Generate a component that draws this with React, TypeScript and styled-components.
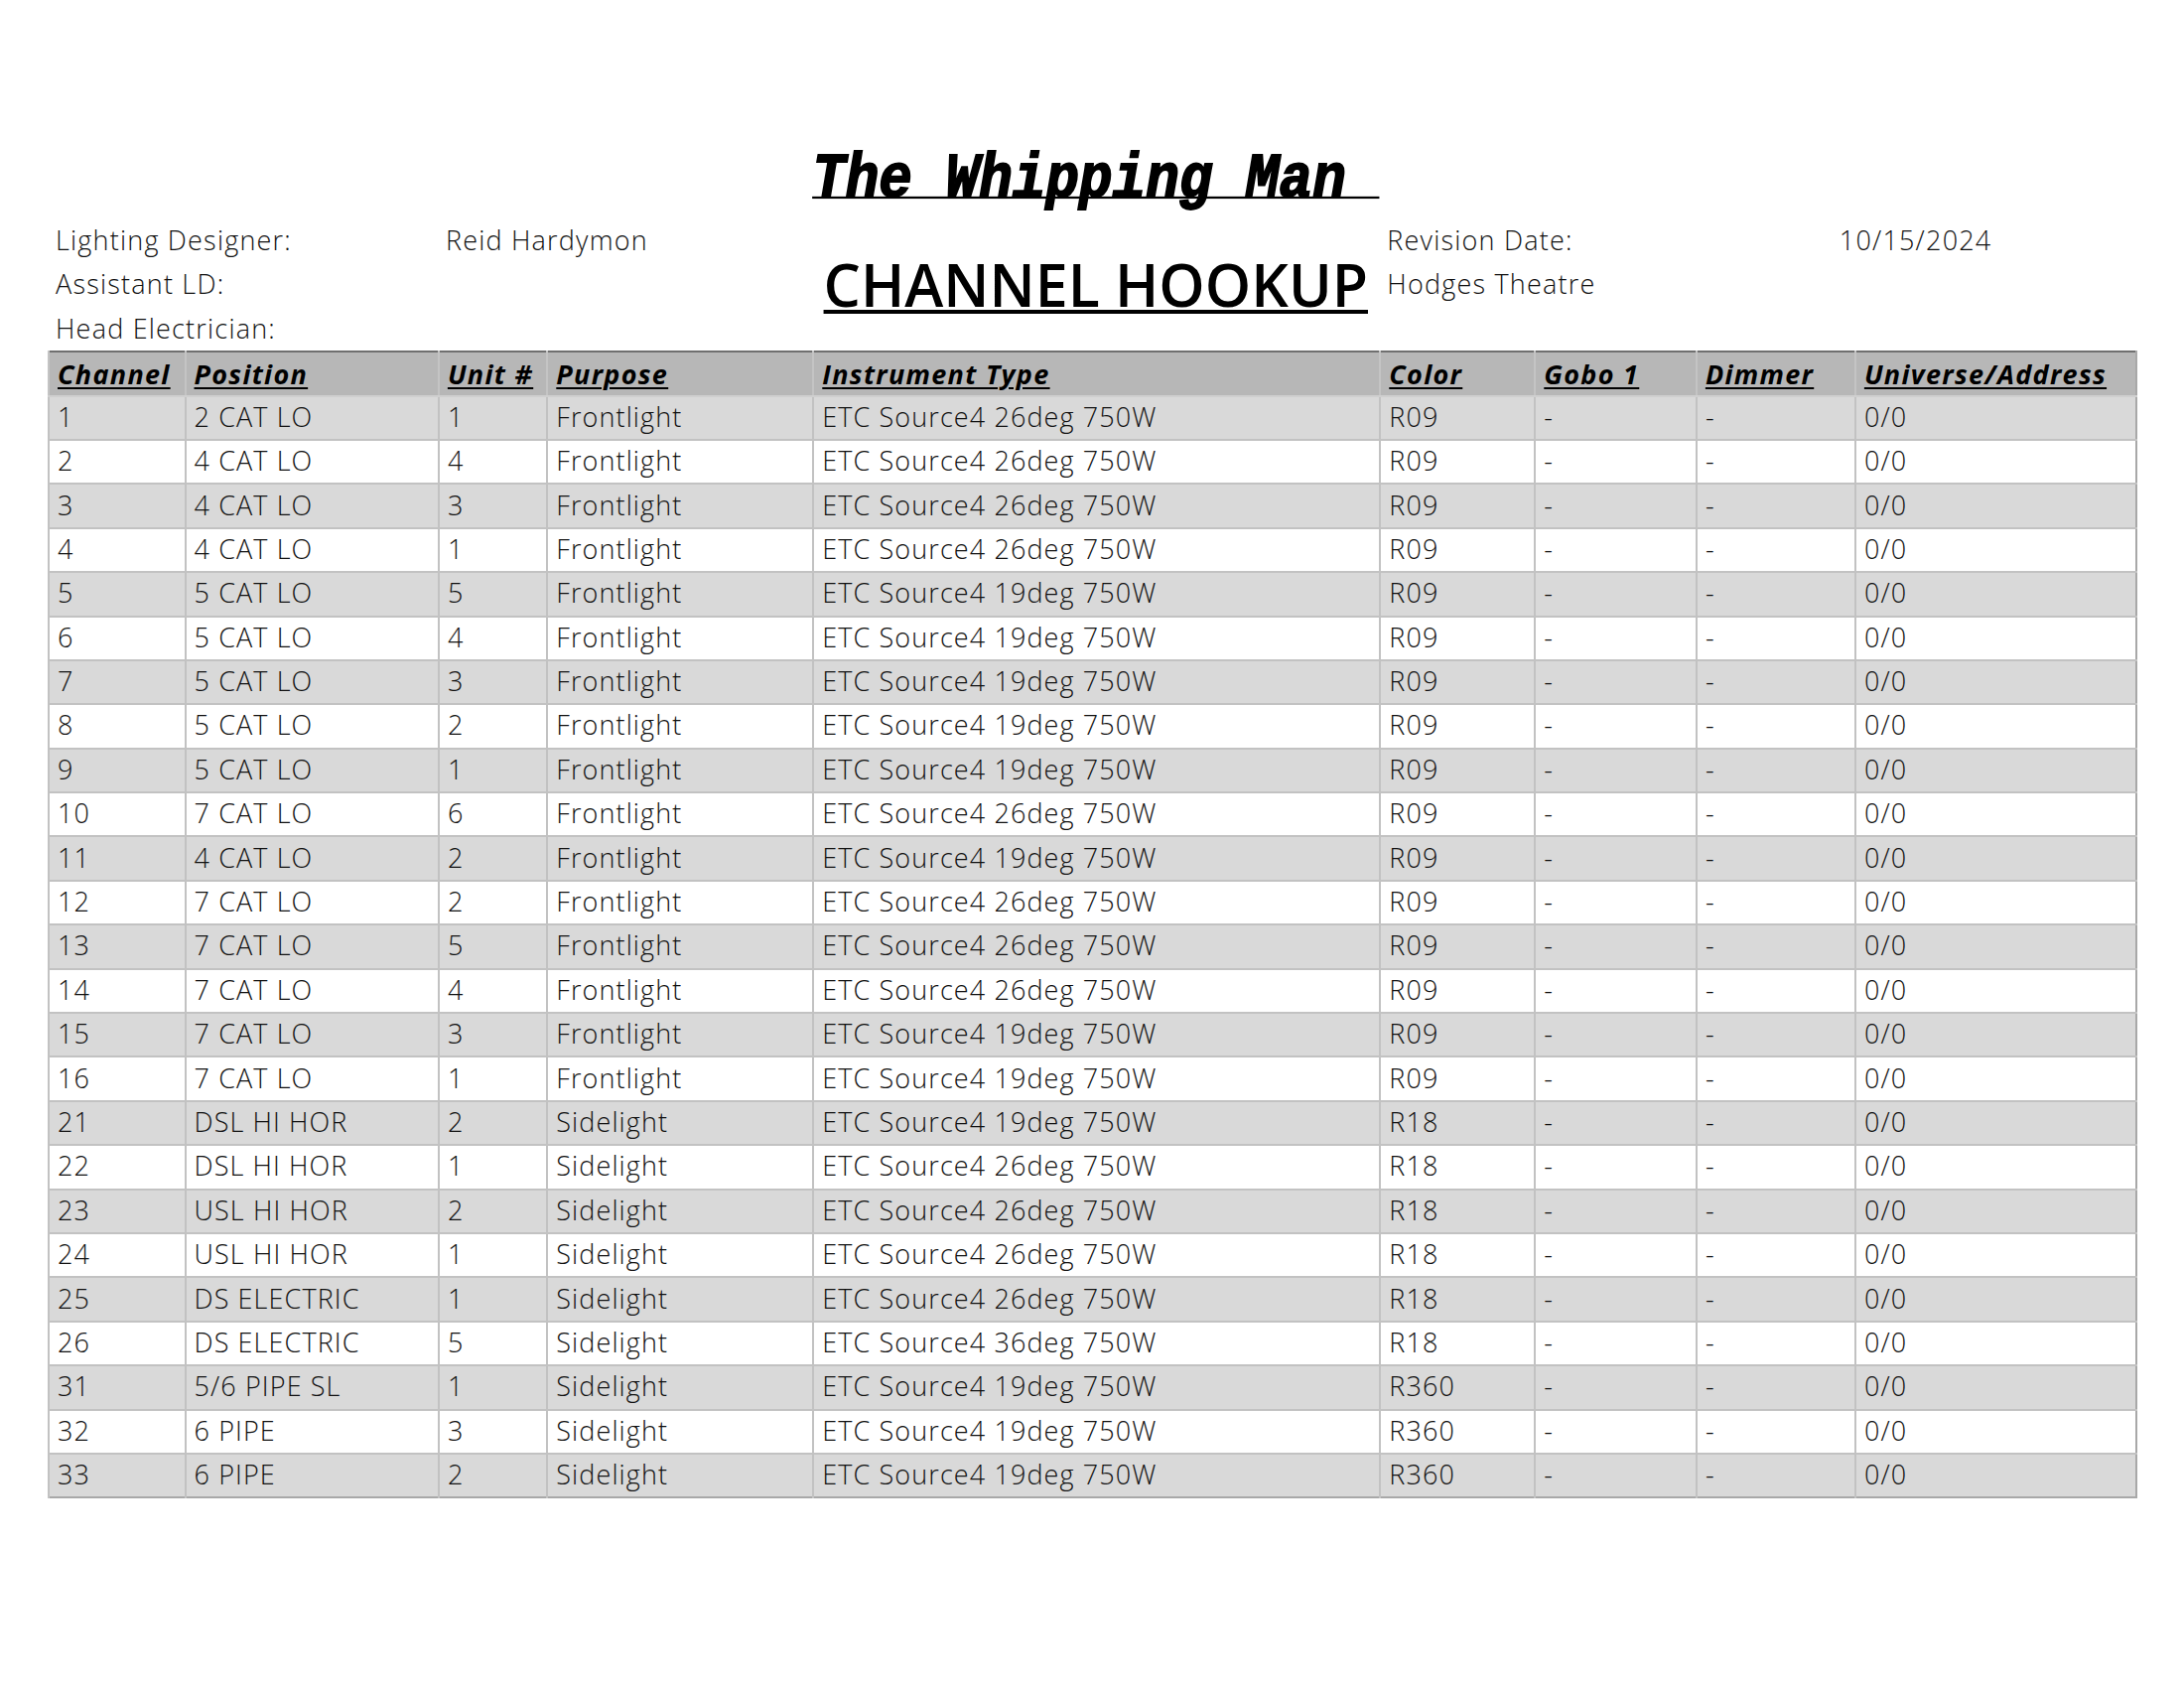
import React from "react";
import styled, { createGlobalStyle } from "styled-components";

const GlobalStyle = createGlobalStyle`
  html, body { margin: 0; padding: 0; background: #ffffff; }
  body { font-family: "Open Sans", "Lato", sans-serif; color: #000; }
`;

const COLS = "137.5px 255.4px 109.4px 268px 571px 156px 162.6px 160px 283.5px";
const ROW_H = 44.4;

const Page = styled.div`
  padding: 130px 0 0 48px;
  width: 2103.4px;
`;

const InfoGrid = styled.div`
  display: grid;
  grid-template-columns: ${COLS};
  grid-template-rows: 90px repeat(3, ${ROW_H}px);
`;

const Title = styled.div`
  grid-column: 5;
  grid-row: 1;
  justify-self: center;
  align-self: end;
  margin-bottom: 8px;
  font-family: "Liberation Mono", "DejaVu Sans Mono", monospace;
  font-weight: 700;
  font-style: italic;
  font-size: 56px;
  line-height: 58px;
  white-space: pre;
  -webkit-text-stroke: 1.6px #000;
  text-decoration: underline;
  text-decoration-thickness: 2px;
  text-underline-offset: 0px;
  text-decoration-skip-ink: none;
  transform: scaleY(1.12);
  transform-origin: 50% 78%;
`;

const InfoCell = styled.div<{ $col: number; $row: number; $span?: number; $center?: boolean }>`
  grid-column: ${(p) => p.$col} / span ${(p) => p.$span ?? 1};
  grid-row: ${(p) => p.$row};
  padding: 0 8px;
  white-space: nowrap;
  line-height: ${ROW_H}px;
  font-size: 27px;
  letter-spacing: 1.2px;
  font-weight: 300;
  color: #111;
  text-align: ${(p) => (p.$center ? "center" : "left")};
`;

const Heading = styled.div`
  grid-column: 5;
  grid-row: 3;
  justify-self: center;
  white-space: nowrap;
  font-family: "Open Sans", sans-serif;
  font-weight: 600;
  font-size: 59px;
  line-height: ${ROW_H}px;
  text-decoration: underline;
  text-decoration-thickness: 4px;
  text-underline-offset: 3px;
  text-decoration-skip-ink: none;
`;

const Table = styled.table`
  border-collapse: collapse;
  table-layout: fixed;
  width: 2103.4px;
  border-top: 2px solid #6f6f6f;
  border-left: 2px solid #6f6f6f;
  border-right: 2px solid #a8a8a8;
  border-bottom: 2px solid #a8a8a8;
`;

const HeadRow = styled.tr`
  height: ${ROW_H}px;
  background: #b7b7b7;
`;

const HeadCell = styled.th`
  padding: 0 8px;
  text-align: left;
  font-weight: 700;
  font-style: italic;
  font-size: 27px;
  letter-spacing: 1.3px;
  text-decoration: underline;
  text-decoration-thickness: 1.5px;
  text-underline-offset: 3px;
  white-space: nowrap;
  overflow: hidden;
  border-left: 2px solid #c4c4c4;
  border-bottom: 2px solid #cfcfcf;
`;

const BodyRow = styled.tr<{ $shade: boolean }>`
  height: ${ROW_H}px;
  background: ${(p) => (p.$shade ? "#d9d9d9" : "#ffffff")};
`;

const Cell = styled.td`
  padding: 0 8px 3px 8px;
  font-size: 27px;
  letter-spacing: 1.1px;
  font-weight: 300;
  color: #111;
  white-space: nowrap;
  overflow: hidden;
  border-left: 2px solid #c2c2c2;
  border-top: 2px solid #c2c2c2;
`;

const widths = [137.5, 255.4, 109.4, 268, 571, 156, 162.6, 160, 283.5];
const headers = [
  "Channel",
  "Position",
  "Unit #",
  "Purpose",
  "Instrument Type",
  "Color",
  "Gobo 1",
  "Dimmer",
  "Universe/Address",
];

type Row = [string, string, string, string, string, string];
const rows: Row[] = [
  ["1", "2 CAT LO", "1", "Frontlight", "26", "R09"],
  ["2", "4 CAT LO", "4", "Frontlight", "26", "R09"],
  ["3", "4 CAT LO", "3", "Frontlight", "26", "R09"],
  ["4", "4 CAT LO", "1", "Frontlight", "26", "R09"],
  ["5", "5 CAT LO", "5", "Frontlight", "19", "R09"],
  ["6", "5 CAT LO", "4", "Frontlight", "19", "R09"],
  ["7", "5 CAT LO", "3", "Frontlight", "19", "R09"],
  ["8", "5 CAT LO", "2", "Frontlight", "19", "R09"],
  ["9", "5 CAT LO", "1", "Frontlight", "19", "R09"],
  ["10", "7 CAT LO", "6", "Frontlight", "26", "R09"],
  ["11", "4 CAT LO", "2", "Frontlight", "19", "R09"],
  ["12", "7 CAT LO", "2", "Frontlight", "26", "R09"],
  ["13", "7 CAT LO", "5", "Frontlight", "26", "R09"],
  ["14", "7 CAT LO", "4", "Frontlight", "26", "R09"],
  ["15", "7 CAT LO", "3", "Frontlight", "19", "R09"],
  ["16", "7 CAT LO", "1", "Frontlight", "19", "R09"],
  ["21", "DSL HI HOR", "2", "Sidelight", "19", "R18"],
  ["22", "DSL HI HOR", "1", "Sidelight", "26", "R18"],
  ["23", "USL HI HOR", "2", "Sidelight", "26", "R18"],
  ["24", "USL HI HOR", "1", "Sidelight", "26", "R18"],
  ["25", "DS ELECTRIC", "1", "Sidelight", "26", "R18"],
  ["26", "DS ELECTRIC", "5", "Sidelight", "36", "R18"],
  ["31", "5/6 PIPE SL", "1", "Sidelight", "19", "R360"],
  ["32", "6 PIPE", "3", "Sidelight", "19", "R360"],
  ["33", "6 PIPE", "2", "Sidelight", "19", "R360"],
];

export default function App() {
  return (
    <>
      <GlobalStyle />
      <Page>
        <InfoGrid>
          <Title>{"The Whipping Man\u00a0"}</Title>
          <InfoCell $col={1} $row={2} $span={2}>Lighting Designer:</InfoCell>
          <InfoCell $col={3} $row={2} $span={2}>Reid Hardymon</InfoCell>
          <InfoCell $col={6} $row={2}>Revision Date:</InfoCell>
          <InfoCell $col={8} $row={2} $span={2} $center>10/15/2024</InfoCell>
          <InfoCell $col={1} $row={3} $span={2}>Assistant LD:</InfoCell>
          <Heading>CHANNEL HOOKUP</Heading>
          <InfoCell $col={6} $row={3} $span={2}>Hodges Theatre</InfoCell>
          <InfoCell $col={1} $row={4} $span={2}>Head Electrician:</InfoCell>
        </InfoGrid>
        <Table>
          <colgroup>
            {widths.map((w, i) => (
              <col key={i} style={{ width: w }} />
            ))}
          </colgroup>
          <thead>
            <HeadRow>
              {headers.map((h) => (
                <HeadCell key={h}>{h}</HeadCell>
              ))}
            </HeadRow>
          </thead>
          <tbody>
            {rows.map((r, i) => (
              <BodyRow key={r[0]} $shade={i % 2 === 0}>
                <Cell>{r[0]}</Cell>
                <Cell>{r[1]}</Cell>
                <Cell>{r[2]}</Cell>
                <Cell>{r[3]}</Cell>
                <Cell>{`ETC Source4 ${r[4]}deg 750W`}</Cell>
                <Cell>{r[5]}</Cell>
                <Cell>-</Cell>
                <Cell>-</Cell>
                <Cell>0/0</Cell>
              </BodyRow>
            ))}
          </tbody>
        </Table>
      </Page>
    </>
  );
}
